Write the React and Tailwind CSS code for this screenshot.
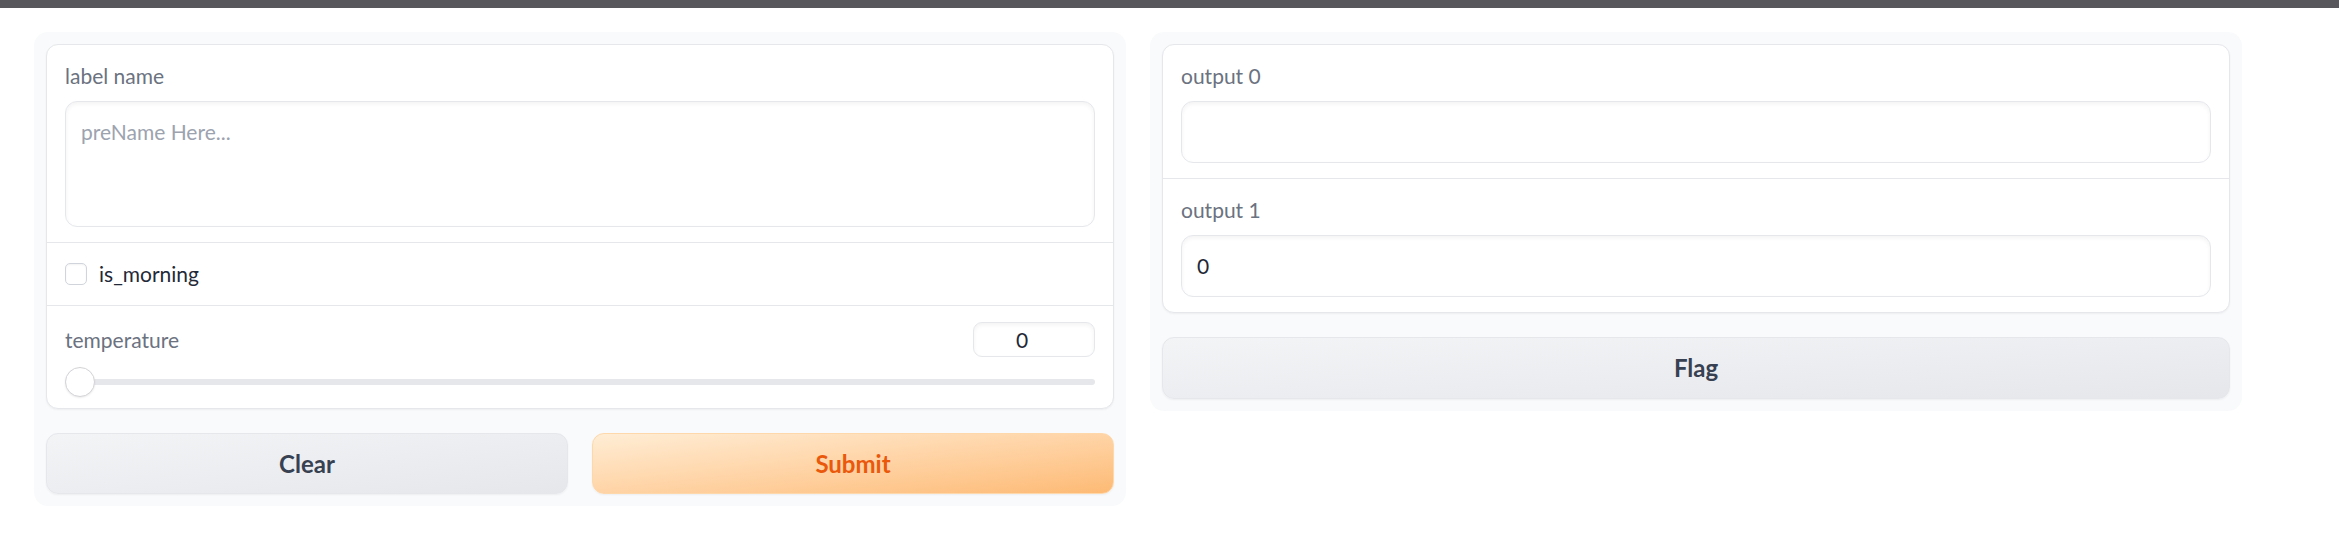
import React from 'react';

// Interfaz de dos columnas: entradas a la izquierda, salidas a la derecha
const Label = ({ children }) => (
  <div className="text-[21px] leading-[31px] text-[#6b7280]">{children}</div>
);

const Box = ({ children, className = '' }) => (
  <div
    className={`w-full rounded-[12px] border border-[#e5e7eb] bg-white px-[15px] py-[14px] text-[21px] leading-[32px] text-[#1f2937] shadow-[inset_0_2px_4px_rgba(0,0,0,0.05)] ${className}`}
  >
    {children}
  </div>
);

const App = () => {
  return (
    <div className="min-h-screen bg-white font-['Lato','Liberation_Sans',sans-serif]">
      <div className="h-[8px] bg-[#58585c]" />

      <div className="flex items-start gap-[24px] pl-[34px] pt-[24px]">
        {/* columna de entradas */}
        <div className="w-[1092px] rounded-[14px] bg-[#f9fafb] p-[12px]">
          <div className="rounded-[12px] border border-[#e5e7eb] bg-white shadow-[0_1px_2px_rgba(0,0,0,0.05)]">
            <div className="px-[18px] py-[15px]">
              <Label>label name</Label>
              <textarea
                rows={3}
                placeholder="preName Here..."
                className="mt-[10px] block w-full resize-none rounded-[12px] border border-[#e5e7eb] bg-white px-[15px] py-[14px] text-[21px] leading-[32px] text-[#1f2937] shadow-[inset_0_2px_4px_rgba(0,0,0,0.05)] outline-none placeholder:text-[#9ca3af]"
              />
            </div>

            <div className="border-t border-[#e5e7eb] px-[18px] py-[15px]">
              <div className="flex items-center gap-[12px] h-[32px]">
                <span className="block h-[22px] w-[22px] rounded-[5px] border border-[#d1d5db] bg-white shadow-[inset_0_1px_2px_rgba(0,0,0,0.05)]" />
                <span className="text-[21px] leading-[32px] text-[#1f2937]">is_morning</span>
              </div>
            </div>

            <div className="border-t border-[#e5e7eb] px-[18px] pt-[16px] pb-[11px]">
              <div className="flex items-center justify-between">
                <Label>temperature</Label>
                <div className="flex h-[35px] w-[122px] items-center justify-center rounded-[9px] border border-[#e5e7eb] bg-white pr-[24px] text-[21px] text-[#1f2937] shadow-[inset_0_2px_4px_rgba(0,0,0,0.05)]">
                  0
                </div>
              </div>
              <div className="relative mt-[10px] h-[30px]">
                <div className="absolute left-0 right-0 top-[12px] h-[6px] rounded-full bg-[#e5e7eb]" />
                <div className="absolute left-0 top-0 h-[30px] w-[30px] rounded-full border border-[#d4d4d8] bg-white shadow-[0_1px_2px_rgba(0,0,0,0.08)]" />
              </div>
            </div>
          </div>

          <div className="mt-[24px] flex gap-[24px]">
            <button className="h-[61px] flex-1 rounded-[12px] border border-[#e5e7eb] bg-gradient-to-br from-[#f3f4f6] to-[#e5e7eb] text-[24px] font-bold text-[#374151] shadow-[0_1px_2px_rgba(0,0,0,0.05)]">
              Clear
            </button>
            <button className="h-[61px] flex-1 rounded-[12px] border border-[#fed7aa] bg-gradient-to-br from-[#ffedd5] to-[#fdba74] text-[24px] font-bold text-[#ea580c] shadow-[0_1px_2px_rgba(0,0,0,0.05)]">
              Submit
            </button>
          </div>
        </div>

        {/* columna de salidas */}
        <div className="w-[1092px] rounded-[14px] bg-[#f9fafb] p-[12px]">
          <div className="rounded-[12px] border border-[#e5e7eb] bg-white shadow-[0_1px_2px_rgba(0,0,0,0.05)]">
            <div className="px-[18px] py-[15px]">
              <Label>output 0</Label>
              <Box className="mt-[10px]">&nbsp;</Box>
            </div>
            <div className="border-t border-[#e5e7eb] px-[18px] py-[15px]">
              <Label>output 1</Label>
              <Box className="mt-[10px]">0</Box>
            </div>
          </div>

          <button className="mt-[24px] h-[62px] w-full rounded-[12px] border border-[#e5e7eb] bg-gradient-to-br from-[#f3f4f6] to-[#e5e7eb] text-[24px] font-bold text-[#374151] shadow-[0_1px_2px_rgba(0,0,0,0.05)]">
            Flag
          </button>
        </div>
      </div>
    </div>
  );
};

export default App;
